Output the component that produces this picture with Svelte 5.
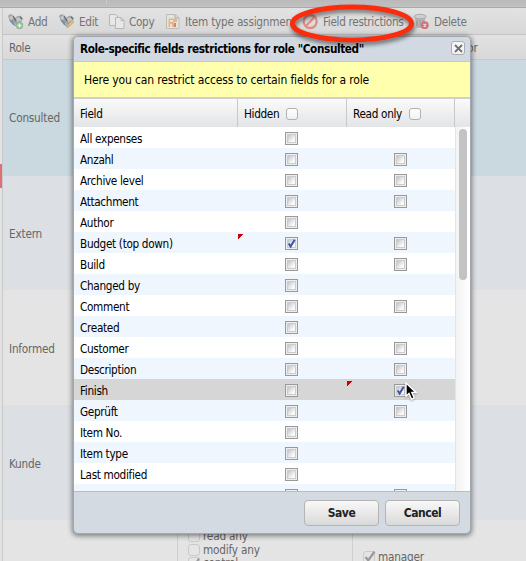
<script>
  // name, has read-only box, hidden checked, read-only checked
  const fields = [
    ['All expenses', false], ['Anzahl', true], ['Archive level', true], ['Attachment', true],
    ['Author', false], ['Budget (top down)', true, true], ['Build', true], ['Changed by', false],
    ['Comment', true], ['Created', false], ['Customer', true], ['Description', true],
    ['Finish', true, false, true], ['Geprüft', true], ['Item No.', false], ['Item type', false],
    ['Last modified', false], ['Name', true]
  ];
  const roles = ['Consulted', 'Extern', 'Informed', 'Kunde', ''];
</script>

{#snippet box(checked)}
  <span class="box">
    {#if checked}
      <svg width="13" height="13" viewBox="0 0 13 13"><path d="M3.7 6.5 L5.6 9.5 L9.7 2.8" fill="none" stroke="#3f55a5" stroke-width="2" /></svg>
    {/if}
  </span>
{/snippet}

{#snippet people(kind)}
  <svg class="ico" width="18" height="17" viewBox="0 0 18 17">
    <path d="M1 3 Q3 0 6 2 L8 5 Q11 2 14 3 L16 6 L14 9 L10 12 L7 10 L3 8Z" fill="#9da2a5" />
    <path d="M2 4 L6 2 L7 5 L4 7Z M9 5 L13 4 L15 7 L10 9Z" fill="#c7c6c2" />
    <path d="M2 7 L6 8 L8 12 L11 10 L14 9 L11 14 L6 12Z" fill="#7790a7" />
    <path d="M6 3 L9 8 M13 4 L15 6" stroke="#65696b" stroke-width="1.3" />
    {#if kind === 'add'}
      <circle cx="12.5" cy="12.5" r="3.7" fill="#91b995" />
      <path d="M10.5 12.5H14.5M12.5 10.5V14.5" stroke="#edf3ed" stroke-width="1.5" />
    {:else}
      <path d="M8.5 14.5 L9.2 12 L14 7.2 L15.8 9 L11 13.8Z" fill="#dfbd78" stroke="#b69d70" stroke-width=".6" />
    {/if}
  </svg>
{/snippet}

<div class="page">
  <div class="topbar"><i></i></div>
  <div class="work">
    <div class="strip"><i></i></div>
    <div class="main">
      <div class="toolbar">
        <span class="tool add">{@render people('add')}<b>Add</b></span>
        <span class="tool edit">{@render people('edit')}<b>Edit</b></span>
        <span class="tool copy">
          <svg class="ico" width="18" height="17" viewBox="0 0 18 17"><g fill="#e7e7e7" stroke="#b3b8ba" stroke-width="1"><path d="M1.5 1.5H7.5L10 4V12.5H1.5Z" /><path d="M7.5 4.5H13L16 7.5V15.5H7.5Z" /><path d="M13 4.5V7.5H16" fill="none" /></g></svg>
          <b>Copy</b>
        </span>
        <span class="tool assign">
          <svg class="ico" width="16" height="17" viewBox="0 0 16 17"><path d="M1.5 1.5H10L14 5V15.5H1.5Z" fill="#e3e3e2" stroke="#bcbcbc" /><path d="M3.5 5.5H12V14H3.5Z" fill="#dfb98e" /><path d="M5 7H8V9H5ZM5 11H7V14H5ZM9 9H12V14H9Z" fill="#f0dfcd" /><path d="M9 10H11V14H9Z" fill="#cf867a" /><path d="M10 2V5H14" fill="none" stroke="#aaa" /></svg>
          <b>Item type assignment</b>
        </span>
        <span class="tool restrict">
          <svg class="ico" width="17" height="17" viewBox="0 0 17 17"><circle cx="8.2" cy="8.5" r="6.5" fill="none" stroke="#dc8f84" stroke-width="2.3" /><path d="M4 13 L12.5 4" stroke="#dc8f84" stroke-width="2.2" /></svg>
          <b>Field restrictions</b>
        </span>
        <span class="tool delete">
          <svg class="ico" width="17" height="17" viewBox="0 0 17 17"><path d="M2 4L3.5 15H11L12.5 4Z" fill="#b7b7b7" /><ellipse cx="7.2" cy="3.5" rx="6" ry="2.2" fill="#cecece" stroke="#aaa" /><path d="M4 7V13M7 7V14M10 7V12" stroke="#999" /><circle cx="11.8" cy="12.2" r="3.9" fill="#d27476" /><path d="M10.5 10.9L13.1 13.5M13.1 10.9L10.5 13.5" stroke="#efd9d9" stroke-width="1.3" /></svg>
          <b>Delete</b>
        </span>
      </div>
      <div class="cols"><span>Role</span><span class="or">or</span></div>
      {#each roles as role, i}
        <div class="role r{i}">
          {#if role}
            <span>{role}</span>
          {:else}
            <div class="perms">
              <label><i class="soft"></i>read any</label>
              <label><i class="soft"></i>modify any</label>
              <label><i class="soft"><svg width="13" height="13" viewBox="0 0 13 13"><path d="M3 7L5.5 10L11 1.5" fill="none" stroke="#999" stroke-width="2" /></svg></i>control</label>
            </div>
            <div class="mgr"><i class="soft"><svg width="13" height="13" viewBox="0 0 13 13"><path d="M2.5 6L5.2 9.5L11.5 0.5" fill="none" stroke="#999" stroke-width="2.2" /></svg></i>manager</div>
          {/if}
        </div>
      {/each}
    </div>
  </div>

  <div class="dialog">
    <div class="title"><span>Role-specific fields restrictions for role "Consulted"</span>
      <span class="close"><svg width="9" height="9" viewBox="0 0 9 9"><path d="M1 1L8 8M8 1L1 8" stroke="#707070" stroke-width="1.8" /></svg></span>
    </div>
    <div class="hint"><span>Here you can restrict access to certain fields for a role</span></div>
    <div class="head">
      <div class="name">Field</div>
      <div class="hid">Hidden<i class="soft"></i></div>
      <div class="ro">Read only<i class="soft"></i></div>
      <div class="end"></div>
    </div>
    <div class="list">
      <div class="rows">
        {#each fields as [name, hasRo, hid, ro], i}
          <div class="row" class:alt={i % 2 === 1} class:hover={name === 'Finish'}>
            <div class="name"><span>{name}</span></div>
            <div class="c1">{#if hid}<i class="dirty"></i>{/if}{@render box(hid)}</div>
            <div class="c2">{#if ro}<i class="dirty"></i>{/if}{#if hasRo}{@render box(ro)}{/if}</div>
          </div>
        {/each}
      </div>
      <div class="track"><div class="thumb"></div></div>
    </div>
    <div class="foot"><button>Save</button><button>Cancel</button></div>
  </div>

  <svg class="ring" width="140" height="50" viewBox="0 0 140 50"><ellipse cx="66" cy="23.5" rx="59.5" ry="16.5" fill="none" stroke="#fb2c0c" stroke-width="5" /></svg>
  <svg class="cursor" width="16" height="21" viewBox="0 0 16 21"><path d="M2 2V15.2L5 12.4L7.5 18.2L10.2 17L7.8 11.4H12Z" fill="#000" stroke="#fff" stroke-width="1.4" /></svg>
</div>

<style>
  .page { position: relative; width: 526px; height: 561px; overflow: hidden; display: flex; flex-direction: column; background: #e4e4e4; font-family: "DejaVu Sans Condensed", "DejaVu Sans", sans-serif; font-stretch: condensed; font-size: 11.7px; letter-spacing: -.33px; line-height: 16px; color: #666; white-space: nowrap; }
  .topbar { height: 7px; flex: none; background: linear-gradient(#b9b9b9, #c1c1c1); border-bottom: 1px solid #aaa; padding-left: 106px; }
  .topbar i { display: block; width: 1px; height: 4px; background: #ccc; }
  .work { flex: 1; display: flex; }
  .strip { width: 2px; border-right: 1px solid #c9c9c9; padding-top: 156px; background: #e2e2e2; }
  .strip i { display: block; height: 24px; background: #dc7078; }
  .main { flex: 1; min-width: 0; }
  .toolbar { height: 26px; border-bottom: 1px solid #c4c4c4; background: linear-gradient(#e2e2e2, #d8d8d8); display: flex; align-items: center; padding-left: 4px; }
  .tool { display: flex; align-items: center; gap: 3px; flex: none; color: #747474; }
  .tool b { font-weight: normal; padding-top: 2px; }
  .ico { flex: none; display: block; }
  .add { width: 51px; } .edit { width: 50px; } .copy { width: 57px; } .assign { width: 137px; } .restrict { width: 111px; }
  .assign { gap: 4px; } .restrict { gap: 4px; } .delete { gap: 4px; }
  .assign b { letter-spacing: -.22px; }
  .cols { height: 24px; border-bottom: 1px solid #c8c8c8; background: linear-gradient(#e2e2e2, #d8d8d8); display: flex; align-items: center; padding-left: 6px; }
  .cols span { padding-top: 1px; }
  .cols .or { margin-left: 437px; }
  .role { height: 115px; display: flex; align-items: center; padding: 2px 0 0 6px; box-sizing: border-box; letter-spacing: -.2px; }
  .r0 { background: #cad8df; height: 116px; padding-top: 0; } .r1, .r3 { background: #dcdfe4; } .r2 { background: #e4e4e4; }
  .r1 { height: 114px; padding-top: 1px; }
  .r4 { height: 41px; align-items: stretch; padding: 0 0 0 174px; }
  .perms { width: 175px; box-sizing: border-box; border-left: 1px solid #cfcfcf; padding: 9px 0 0 10px; display: flex; flex-direction: column; }
  .perms label { display: flex; gap: 3px; height: 14px; line-height: 14px; align-items: center; flex: none; }
  .perms label:last-child { height: 12px; line-height: 12px; }
  .mgr { border-left: 1px solid #cfcfcf; padding: 30px 0 0 10px; display: flex; gap: 3px; height: 11px; line-height: 14px; }
  .mgr .soft { margin-top: 1px; }
  .soft { box-sizing: border-box; flex: none; display: block; width: 12px; height: 12px; border: 1px solid #b1b1b1; border-radius: 3px; background: linear-gradient(#fff, #f1f1f1); }
  .role .soft { border-color: #cacaca; background: #e5e5e5; }
  .soft svg { display: block; margin: -1px; }

  .dialog { position: absolute; left: 73px; top: 36px; width: 398px; height: 498px; box-sizing: border-box; border: 1px solid #a5a7ae; border-radius: 5px; overflow: hidden; background: #d4dae2; color: #000; box-shadow: 0 1px 5px 1px rgba(0,0,0,.45); display: flex; flex-direction: column; }
  .title { height: 24px; flex: none; border-bottom: 1px solid #c4c8cd; display: flex; align-items: center; justify-content: space-between; padding: 0 5px 0 6px; font-weight: bold; font-size: 11.7px; letter-spacing: -.4px; background: #d2d9e2; }
  .close { width: 14px; height: 14px; box-sizing: border-box; border: 1px solid #a9adb1; border-radius: 3px; background: #f4f4f4; display: flex; align-items: center; justify-content: center; margin-top: -2px; }
  .hint { height: 35px; flex: none; background: #ffffae; border-bottom: 2px solid #cfcfd0; display: flex; align-items: center; padding-left: 10px; font-size: 12px; letter-spacing: -.14px; }
  .hint span { padding-top: 1px; }
  .head { height: 28px; flex: none; display: flex; background: linear-gradient(#fafafa, #e3e4e6); }
  .head > div { display: flex; align-items: center; box-sizing: border-box; padding: 2px 0 0 6px; }
  .head .name, .row .name { width: 163px; }
  .hid, .ro, .end { border-left: 1px solid #c9c9c9; }
  .hid { width: 109px; gap: 7px; } .ro { width: 108px; gap: 7px; }
  .list { height: 365px; flex: none; display: flex; overflow: hidden; border-bottom: 1px solid #b9bcc0; box-sizing: border-box; background: #fff; }
  .rows { width: 381px; }
  .row { height: 21px; display: flex; background: #fff; }
  .row.alt { background: #eff6fe; }
  .row.hover { background: #d6d6d6; }
  .row > div { display: flex; align-items: center; box-sizing: border-box; position: relative; }
  .row .name { padding: 2px 0 0 6px; }
  .c1 { width: 109px; padding-left: 48px; }
  .c2 { width: 109px; padding-left: 48px; }
  .dirty { position: absolute; left: 1px; top: 2px; width: 5px; height: 5px; background: linear-gradient(135deg, #c9000c 55%, transparent 55%); }
  .box { width: 13px; height: 13px; box-sizing: border-box; border: 1px solid #999; display: block; background: linear-gradient(135deg, #bfc4cb, #fafafa 75%) content-box, #ececec; padding: 2px; margin-top: 2px; box-shadow: inset 0 0 0 1px #eee, inset 0 0 0 2px #ccc; }
  .box svg { display: block; margin: -3px; }
  .track { width: 15px; box-sizing: border-box; border-left: 1px solid #e4e4e4; background: linear-gradient(90deg, #f3f3f3, #fff); padding: 2px 0 0 3px; }
  .thumb { width: 8px; height: 151px; border-radius: 4px; background: #c3c3c3; }
  .foot { flex: 1; display: flex; justify-content: flex-end; align-items: flex-start; gap: 6px; padding: 8px 10px 0 0; }
  button { width: 75px; height: 26px; box-sizing: border-box; border: 1px solid #b4b4b4; border-radius: 4px; background: linear-gradient(#f8f8f8, #d9d9d9); font: bold 12px "DejaVu Sans Condensed", "DejaVu Sans", sans-serif; font-stretch: condensed; letter-spacing: -.5px; color: #222; padding: 0; }
  .ring { position: absolute; left: 286px; top: 0; filter: drop-shadow(1px 3px 2px rgba(0,0,0,.5)); }
  .cursor { position: absolute; left: 404px; top: 381px; filter: drop-shadow(0 1px 1px rgba(0,0,0,.3)); }
</style>
